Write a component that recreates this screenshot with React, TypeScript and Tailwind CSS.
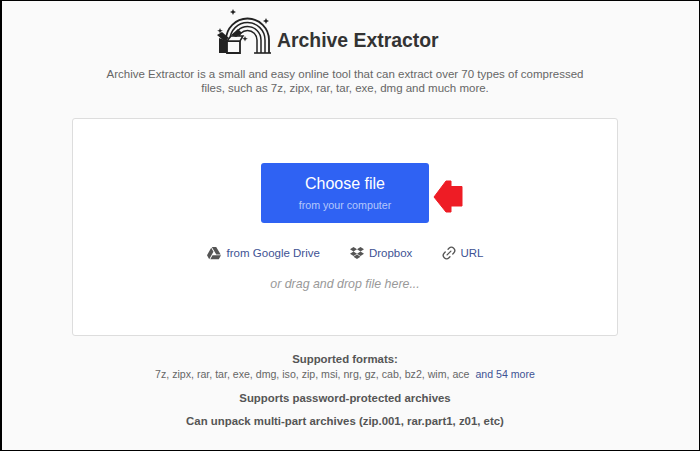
import { FaGoogleDrive, FaDropbox } from 'react-icons/fa';
import { Link2 } from 'lucide-react';

function Logo() {
  return (
    <svg width="56" height="46" viewBox="0 0 56 46" className="shrink-0 text-[#222]">
      <g fill="none" stroke="currentColor">
        <path d="M10 34 V32 A21.5 21.5 0 0 1 53 32 V45" strokeWidth="1.8" />
        <path d="M14 34 V32 A17.5 17.5 0 0 1 49 32 V45" strokeWidth="1.5" />
        <path d="M18 32 A13.5 13.5 0 0 1 45 32 V45" strokeWidth="1.5" />
        <path d="M22 32 A9.5 9.5 0 0 1 41 32 V45" strokeWidth="1.5" />
        <path d="M38 45 H55" strokeWidth="1.6" />
      </g>
      <g fill="currentColor">
        <path d="M3 30 L11 33 V45 H3 Z" />
        <path d="M1 27 L6 24 L13 30 L8 33 Z" />
        <path d="M11 33 H24 V45 H11 Z" fill="#fafafa" stroke="currentColor" strokeWidth="1.8" />
        <path d="M11 33 L15 28 H27 L24 33 Z" fill="#fafafa" stroke="currentColor" strokeWidth="1.5" />
        <path d="M15 27 L22 21 L26 25 L20 29 Z" />
        <path d="M17 1 l.9 2.1 l2.1 .9 l-2.1 .9 l-.9 2.1 l-.9 -2.1 l-2.1 -.9 l2.1 -.9 Z" />
        <path d="M50 10 l.9 2.1 l2.1 .9 l-2.1 .9 l-.9 2.1 l-.9 -2.1 l-2.1 -.9 l2.1 -.9 Z" />
        <path d="M4 20 l.8 2 l2 .8 l-2 .8 l-.8 2 l-.8 -2 l-2 -.8 l2 -.8 Z" />
        <path d="M29 28 l.8 2 l2 .8 l-2 .8 l-.8 2 l-.8 -2 l-2 -.8 l2 -.8 Z" />
      </g>
    </svg>
  );
}

export default function App() {
  return (
    <div className="box-border flex h-[451px] w-[700px] flex-col items-center overflow-hidden border-t border-r border-b border-l-2 border-black bg-[#fafafa] pr-[11px] font-['Liberation_Sans',Arial,sans-serif] text-[#444]">
      <div className="ml-[214px] mt-[7px] flex items-center gap-[5px] self-start">
        <Logo />
        <h1 className="mt-[18px] text-[19.4px] font-bold leading-6 text-[#333]">Archive Extractor</h1>
      </div>

      <p className="mt-[14px] w-[500px] text-center text-[11.5px] leading-[13.5px] text-[#666]">
        Archive Extractor is a small and easy online tool that can extract over 70 types of compressed files, such as 7z, zipx, rar, tar, exe, dmg and much more.
      </p>

      <div className="mt-[22.5px] flex h-[218px] w-[546px] shrink-0 flex-col items-center rounded-[3px] border border-[#ddd] bg-white pt-[44px]">
        <div className="relative">
          <button className="flex h-[60px] w-[168px] flex-col items-center rounded-[3px] bg-[#2f62f3] text-white">
            <span className="mt-[11px] text-[16px] leading-[20px]">Choose file</span>
            <span className="mt-[5px] text-[10.7px] leading-[12px] text-[#b4c7fb]">from your computer</span>
          </button>
          <svg width="30" height="33" viewBox="0 0 30 33" className="absolute left-[172px] top-[17px]">
            <path d="M1 17 L13 1 H18 V6.5 H29 V26 H18 V32 H13 Z" fill="#ee1c25" stroke="#ee1c25" strokeLinejoin="round" />
          </svg>
        </div>

        <div className="mt-[22px] flex items-center text-[11.5px] leading-4 text-[#3e5394]">
          <a className="flex items-center gap-[6px]"><FaGoogleDrive size={14} className="text-[#555]" />from Google Drive</a>
          <a className="ml-[30px] flex items-center gap-[5px]"><FaDropbox size={14} className="text-[#555]" />Dropbox</a>
          <a className="ml-[29px] flex items-center gap-[3px]"><Link2 size={16} className="-rotate-45 text-[#555]" />URL</a>
        </div>

        <p className="mt-[15px] text-[12.4px] italic leading-4 text-[#999]">or drag and drop file here...</p>
      </div>

      <div className="mt-[16px] flex flex-col items-center text-center">
        <p className="text-[11.4px] font-bold leading-[14px] text-[#555]">Supported formats:</p>
        <p className="mt-px text-[10.6px] leading-[14px] text-[#666]">
          7z, zipx, rar, tar, exe, dmg, iso, zip, msi, nrg, gz, cab, bz2, wim, ace <a className="ml-[3px] text-[#3e5394]">and 54 more</a>
        </p>
        <p className="mt-[10px] text-[11.4px] font-bold leading-[14px] text-[#555]">Supports password-protected archives</p>
        <p className="mt-[9px] text-[11.4px] font-bold leading-[14px] text-[#555]">Can unpack multi-part archives (zip.001, rar.part1, z01, etc)</p>
      </div>
    </div>
  );
}
